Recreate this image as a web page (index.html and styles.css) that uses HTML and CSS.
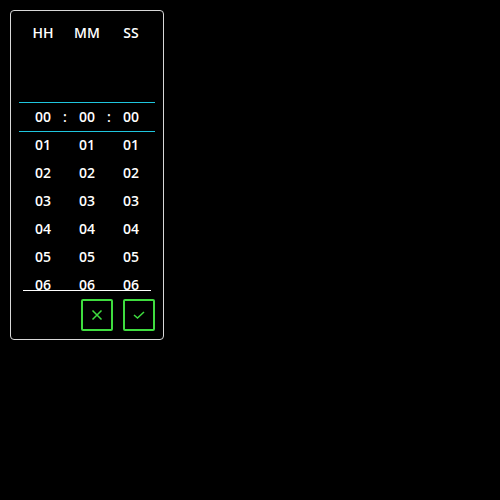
FILE: index.html
```html
<!DOCTYPE html>
<html>
<head>
<meta charset="utf-8">
<link rel="stylesheet" href="styles.css">
</head>
<body>
<div class="card">
  <div class="heads">
    <span class="head">HH</span>
    <span class="head">MM</span>
    <span class="head">SS</span>
  </div>
  <div class="viewport">
    <div class="cols">
      <div class="col">
        <div class="item"></div><div class="item"></div>
        <div class="item">00</div><div class="item">01</div><div class="item">02</div><div class="item">03</div><div class="item">04</div><div class="item">05</div><div class="item">06</div><div class="item">07</div>
      </div>
      <div class="col">
        <div class="item"></div><div class="item"></div>
        <div class="item">00</div><div class="item">01</div><div class="item">02</div><div class="item">03</div><div class="item">04</div><div class="item">05</div><div class="item">06</div><div class="item">07</div>
      </div>
      <div class="col">
        <div class="item"></div><div class="item"></div>
        <div class="item">00</div><div class="item">01</div><div class="item">02</div><div class="item">03</div><div class="item">04</div><div class="item">05</div><div class="item">06</div><div class="item">07</div>
      </div>
    </div>
    <div class="band">
      <span class="colon">:</span>
      <span class="colon">:</span>
    </div>
  </div>
  <div class="rule"></div>
  <div class="actions">
    <button class="btn" aria-label="Cancel">
      <svg width="12" height="12" viewBox="0 0 12 12"><path d="M1.5 1.5L10.5 10.5M10.5 1.5L1.5 10.5" stroke="#3fdc3f" stroke-width="1.5" fill="none"/></svg>
    </button>
    <button class="btn" aria-label="OK">
      <svg width="12" height="10" viewBox="0 0 12 10"><path d="M1 5L4.5 8L11 2" stroke="#3fdc3f" stroke-width="1.5" fill="none"/></svg>
    </button>
  </div>
</div>
</body>
</html>
```
FILE: styles.css
```css
html, body {
  margin: 0;
  padding: 0;
  background: #000;
}
body {
  padding: 10px;
  font-family: "Open Sans", "DejaVu Sans", sans-serif;
  color: #fff;
}
.card {
  box-sizing: border-box;
  width: 154px;
  height: 330px;
  border: 1px solid #d8d8d8;
  border-radius: 4px;
  padding: 12px 8px 8px 8px;
  display: flex;
  flex-direction: column;
}
.heads {
  display: flex;
  justify-content: center;
  height: 20px;
  margin-bottom: 4px;
}
.head {
  width: 44px;
  text-align: center;
  font-size: 14px;
  font-weight: 600;
  line-height: 20px;
}
.viewport {
  position: relative;
  height: 243px;
  overflow: hidden;
}
.cols {
  display: flex;
  justify-content: center;
}
.col {
  width: 44px;
  display: flex;
  flex-direction: column;
}
.item {
  height: 28px;
  line-height: 28px;
  text-align: center;
  font-size: 14px;
  font-weight: 600;
}
.band {
  position: absolute;
  left: 0;
  right: 0;
  top: 55px;
  height: 30px;
  box-sizing: border-box;
  border-top: 1px solid #1fc6de;
  border-bottom: 1px solid #1fc6de;
  display: flex;
  justify-content: center;
  gap: 44px;
}
.colon {
  width: 0;
  display: flex;
  justify-content: center;
  line-height: 28px;
  font-size: 14px;
  font-weight: 600;
}
.rule {
  height: 1px;
  margin: 0 4px;
  background: #fff;
}
.actions {
  display: flex;
  justify-content: flex-end;
  gap: 10px;
  margin-top: 8px;
}
.btn {
  box-sizing: border-box;
  width: 32px;
  height: 32px;
  padding: 0;
  background: transparent;
  border: 2px solid #3fdc3f;
  border-radius: 2px;
  display: flex;
  align-items: center;
  justify-content: center;
}
```
